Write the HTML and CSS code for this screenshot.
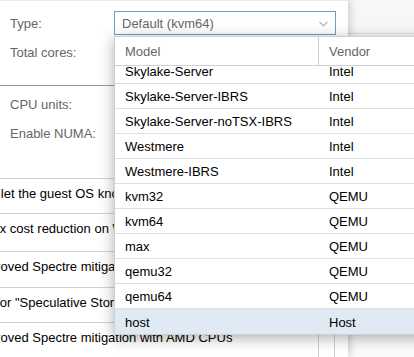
FILE: index.html
```html
<!DOCTYPE html>
<html lang="en">
<head>
    <meta charset="UTF-8">
    <meta name="viewport" content="width=device-width, initial-scale=1.0">
    <title>CPU type</title>
    <link rel="stylesheet" href="styles.css">
</head>
<body>

    <div class="page">
        <!-- Dialog with the processor form -->
        <div class="dialog">
            <div class="form">
                <div class="field">
                    <label class="field-label">Type:</label>
                    <div class="combo">
                        <span class="combo-value">Default (kvm64)</span>
                        <svg class="combo-arrow" width="9" height="6" viewBox="0 0 9 6">
                            <polyline points="0.5,0.8 4.5,4.8 8.5,0.8" fill="none" stroke="#a8a8a8" stroke-width="1.1"/>
                        </svg>
                    </div>
                </div>
                <div class="field">
                    <label class="field-label">Total cores:</label>
                </div>

                <div class="separator"></div>

                <div class="field">
                    <label class="field-label">CPU units:</label>
                </div>
                <div class="field">
                    <label class="field-label">Enable NUMA:</label>
                </div>
            </div>

            <!-- CPU flags grid -->
            <div class="flags">
                <div class="flag-row"><span class="flag-text flag-text-wide">Required to let the guest OS know if MDS is mitigated correctly</span><span class="flag-end"></span></div>
                <div class="flag-row flag-row-tall"><span class="flag-text">Meltdown fix cost reduction on Westmere, Sandy-, and IvyBridge Intel CPUs</span><span class="flag-end"></span></div>
                <div class="flag-row flag-row-mid"><span class="flag-text">Allows improved Spectre mitigation with Intel CPUs</span><span class="flag-end"></span></div>
                <div class="flag-row"><span class="flag-text">Protection for "Speculative Store Bypass" for Intel models</span><span class="flag-end"></span></div>
                <div class="flag-row"><span class="flag-text">Allows improved Spectre mitigation with AMD CPUs</span><span class="flag-end"></span></div>
            </div>
        </div>

        <div class="backdrop">
            <div class="backdrop-bar"></div>
        </div>

        <!-- Open picker of the Type combobox -->
        <div class="picker">
            <div class="picker-head">
                <div class="col-model">Model</div>
                <div class="col-vendor">Vendor</div>
            </div>
            <div class="picker-body">
                <div class="picker-list">
                    <div class="item"><div class="col-model">Skylake-Server</div><div class="col-vendor">Intel</div></div>
                    <div class="item"><div class="col-model">Skylake-Server-IBRS</div><div class="col-vendor">Intel</div></div>
                    <div class="item"><div class="col-model">Skylake-Server-noTSX-IBRS</div><div class="col-vendor">Intel</div></div>
                    <div class="item"><div class="col-model">Westmere</div><div class="col-vendor">Intel</div></div>
                    <div class="item"><div class="col-model">Westmere-IBRS</div><div class="col-vendor">Intel</div></div>
                    <div class="item"><div class="col-model">kvm32</div><div class="col-vendor">QEMU</div></div>
                    <div class="item"><div class="col-model">kvm64</div><div class="col-vendor">QEMU</div></div>
                    <div class="item"><div class="col-model">max</div><div class="col-vendor">QEMU</div></div>
                    <div class="item"><div class="col-model">qemu32</div><div class="col-vendor">QEMU</div></div>
                    <div class="item"><div class="col-model">qemu64</div><div class="col-vendor">QEMU</div></div>
                    <div class="item item-selected"><div class="col-model">host</div><div class="col-vendor">Host</div></div>
                </div>
            </div>
        </div>
    </div>

</body>
</html>
```

FILE: styles.css
```css
* {
    box-sizing: border-box;
}
body {
    margin: 0;
    padding: 0;
    background-color: #fff;
    font-family: "Liberation Sans", Arial, sans-serif;
    font-size: 13px;
    color: #000;
}
.page {
    position: relative;
    display: flex;
    width: 414px;
    height: 357px;
    overflow: hidden;
}
/* Dialog */
.dialog {
    position: relative;
    z-index: 1;
    width: 348px;
    flex: none;
    background-color: #fff;
    border-top: 1px solid #ececec;
    box-shadow: 2px 0 8px rgba(0, 0, 0, 0.18);
}
.form {
    padding: 10px 0 0 10px;
}
.field {
    display: flex;
    align-items: center;
    height: 24px;
    margin-bottom: 5px;
}
.field-label {
    width: 104px;
    color: #666;
}
.combo {
    display: flex;
    align-items: center;
    justify-content: space-between;
    width: 222px;
    height: 24px;
    padding: 0 7px;
    border: 1px solid #6a9fcc;
    color: #666;
}
.combo-arrow {
    margin-top: 1px;
}
.separator {
    margin: 21px 0 6px -10px;
    width: 130px;
    border-top: 1px solid #999;
}
/* Flags grid */
.flags {
    margin-top: 33px;
    width: 335px;
    border-right: 1px solid #d0d0d0;
    border-top: 1px solid #d0d0d0;
}
.flag-row {
    display: flex;
    height: 35px;
    border-bottom: 1px solid #d0d0d0;
    overflow: hidden;
}
.flag-row-tall {
    height: 38px;
}
.flag-row-mid {
    height: 36px;
}
.flag-text {
    flex: 1;
    margin-left: -66px;
    padding-top: 7px;
    line-height: 16px;
    white-space: nowrap;
    overflow: hidden;
}
.flag-text-wide {
    margin-left: -70px;
}
.flag-end {
    width: 16px;
    flex: none;
    border-left: 1px solid #d0d0d0;
    background-color: #fff;
}
/* Background behind the dialog */
.backdrop {
    flex: 1;
    background-color: #fbfbfb;
}
.backdrop-bar {
    height: 34px;
    border-bottom: 1px solid #e2e2e2;
    background-color: #f7f7f7;
}
/* Picker */
.picker {
    position: absolute;
    z-index: 2;
    left: 114px;
    top: 36px;
    width: 320px;
    background-color: #fff;
    border: 1px solid #cfcfcf;
    box-shadow: 0 3px 14px rgba(0, 0, 0, 0.32);
}
.picker-head {
    display: flex;
    height: 29px;
    border-bottom: 1px solid #d0d0d0;
    color: #666;
}
.picker-head .col-model {
    border-right: 1px solid #d0d0d0;
}
.col-model {
    width: 204px;
    padding-left: 10px;
    display: flex;
    align-items: center;
}
.col-vendor {
    flex: 1;
    padding-left: 10px;
    display: flex;
    align-items: center;
}
.picker-body {
    height: 268px;
    overflow: hidden;
}
.picker-list {
    margin-top: -7px;
}
.item {
    display: flex;
    height: 25px;
    padding-top: 1px;
    border-bottom: 1px solid #e0e0e0;
}
.item-selected {
    background-color: #dfeaf5;
    border-bottom: none;
}
```
